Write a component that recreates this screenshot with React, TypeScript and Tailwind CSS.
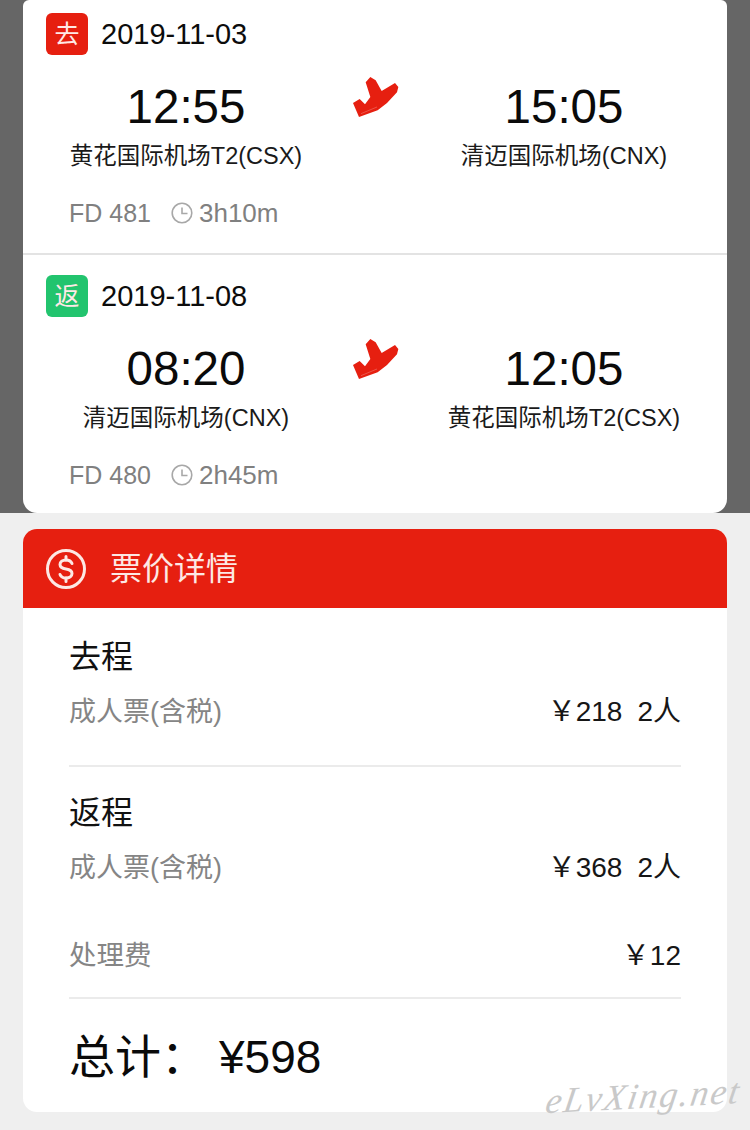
import React from 'react'

const FONT = { fontFamily: '"Liberation Sans", "Noto Sans CJK SC", sans-serif' }

interface Segment {
  tag: string
  tagColor: string
  date: string
  depTime: string
  depAirport: string
  arrTime: string
  arrAirport: string
  flightNo: string
  duration: string
}

const segments: Segment[] = [
  {
    tag: '去',
    tagColor: 'bg-[#e61f10]',
    date: '2019-11-03',
    depTime: '12:55',
    depAirport: '黄花国际机场T2(CSX)',
    arrTime: '15:05',
    arrAirport: '清迈国际机场(CNX)',
    flightNo: 'FD 481',
    duration: '3h10m'
  },
  {
    tag: '返',
    tagColor: 'bg-[#22c46e]',
    date: '2019-11-08',
    depTime: '08:20',
    depAirport: '清迈国际机场(CNX)',
    arrTime: '12:05',
    arrAirport: '黄花国际机场T2(CSX)',
    flightNo: 'FD 480',
    duration: '2h45m'
  }
]

const PlaneIcon = () => (
  <svg width="48" height="42" viewBox="60 50 144 126" className="block">
    <path
      d="M104 66 L118 50 L134 60 L152 92 L192 68 L202 80 L198 96 L168 128 L140 150 L84 170 L66 128 L86 116 L102 132 L118 110 Z"
      fill="#e61f10"
    />
    <path d="M90 160 L138 140" fill="none" stroke="#fff" strokeWidth="2" opacity="0.35" />
  </svg>
)

const ClockIcon = () => (
  <svg width="22" height="22" viewBox="0 0 22 22" fill="none" stroke="#a8a8a8" strokeWidth="1.6" className="block">
    <circle cx="11" cy="11" r="9.8" />
    <path d="M11 5.5V11.5H16.5" />
  </svg>
)

const DollarIcon = () => (
  <svg width="42" height="42" viewBox="0 0 42 42" fill="none" stroke="#fde8e4" strokeWidth="3" className="block">
    <circle cx="21" cy="21" r="18.5" />
    <path d="M27 15.5C26 13 24 12 21 12C17.5 12 15 13.8 15 16.5C15 19.5 18 20.5 21 21C24 21.5 27 22.5 27 25.5C27 28.2 24.5 30 21 30C18 30 16 29 15 26.5" strokeLinecap="round" />
    <path d="M21 8.5V12M21 30V33.5" strokeLinecap="round" />
  </svg>
)

const FlightSegment: React.FC<{ segment: Segment; bordered?: boolean }> = ({ segment, bordered }) => (
  <div className={`h-[255px] ${bordered ? 'border-b-2 border-[#e3e3e3]' : ''}`}>
    <div className="flex items-center pl-[23px] pt-[13px]">
      <div className={`flex h-[42px] w-[42px] items-center justify-center rounded-[6px] text-[25px] leading-none text-[#ffe9e6] ${segment.tagColor}`}>
        {segment.tag}
      </div>
      <div className="ml-[13px] text-[29px] leading-none text-[#0c0c0c]">{segment.date}</div>
    </div>
    <div className="mt-[19px] grid grid-cols-[326px_52px_326px]">
      <div className="flex flex-col items-center">
        <div className="text-[47.5px] leading-[66px] text-[#0a0a0a]">{segment.depTime}</div>
        <div className="text-[23.5px] leading-[32px] text-[#1a1a1a]">{segment.depAirport}</div>
      </div>
      <div className="flex justify-center pt-[3px]">
        <PlaneIcon />
      </div>
      <div className="flex flex-col items-center">
        <div className="text-[47.5px] leading-[66px] text-[#0a0a0a]">{segment.arrTime}</div>
        <div className="text-[23.5px] leading-[32px] text-[#1a1a1a]">{segment.arrAirport}</div>
      </div>
    </div>
    <div className="mt-[25px] flex items-center pl-[46px] text-[25px] leading-[32px] text-[#808080]">
      <span>{segment.flightNo}</span>
      <span className="ml-[20px] mr-[6px]">
        <ClockIcon />
      </span>
      <span className="text-[26px]">{segment.duration}</span>
    </div>
  </div>
)

const PriceRow: React.FC<{ label: string; price: string; count: string }> = ({ label, price, count }) => (
  <div className="flex items-center justify-between leading-[36px]">
    <span className="text-[27px] text-[#858585]">{label}</span>
    <span className="text-[28px] text-[#161616]">
      {price}
      <span className="ml-[15px]">{count}</span>
    </span>
  </div>
)

export default function App() {
  return (
    <div className="relative h-[1130px] w-[750px] overflow-hidden bg-[#efefef]" style={FONT}>
      {/* 航班信息 */}
      <div className="h-[513px] bg-[#666666] px-[23px]">
        <div className="h-[513px] overflow-hidden rounded-b-[14px] rounded-t-[6px] bg-white">
          <FlightSegment segment={segments[0]} bordered />
          <div className="pt-[7px]">
            <FlightSegment segment={segments[1]} />
          </div>
        </div>
      </div>

      {/* 票价详情 */}
      <div className="mx-[23px] mt-[16px] h-[583px] overflow-hidden rounded-[14px] bg-white">
        <div className="flex h-[79px] items-center bg-[#e61f10] pl-[22px] text-[#fde8e4]">
          <DollarIcon />
          <span className="ml-[23px] text-[32px] leading-none">票价详情</span>
        </div>
        <div className="px-[46px]">
          <div className="border-b-2 border-[#ebebeb] pb-[35px] pt-[27px]">
            <div className="text-[32px] leading-[44px] text-[#111]">去程</div>
            <div className="mt-[15px]">
              <PriceRow label="成人票(含税)" price="￥218" count="2人" />
            </div>
          </div>
          <div className="pt-[24px]">
            <div className="text-[32px] leading-[44px] text-[#111]">返程</div>
            <div className="mt-[15px]">
              <PriceRow label="成人票(含税)" price="￥368" count="2人" />
            </div>
          </div>
          <div className="mt-[52px] flex items-center justify-between border-b-2 border-[#ebebeb] pb-[23px] leading-[36px]">
            <span className="text-[27.5px] text-[#858585]">处理费</span>
            <span className="text-[28px] text-[#161616]">￥12</span>
          </div>
          <div className="mt-[31px] flex items-center text-[46px] leading-[54px] text-[#0a0a0a]">
            <span className="w-[150px]">总计：</span>
            <span>¥598</span>
          </div>
        </div>
      </div>

      {/* 水印 */}
      <div
        className="absolute left-[546px] top-[1074px] -rotate-3 -skew-x-12 text-[36px] italic leading-[44px] tracking-[2px] text-[#c9c9c9]"
        style={{ fontFamily: '"Liberation Serif", serif' }}
      >
        eLvXing.net
      </div>
    </div>
  )
}
